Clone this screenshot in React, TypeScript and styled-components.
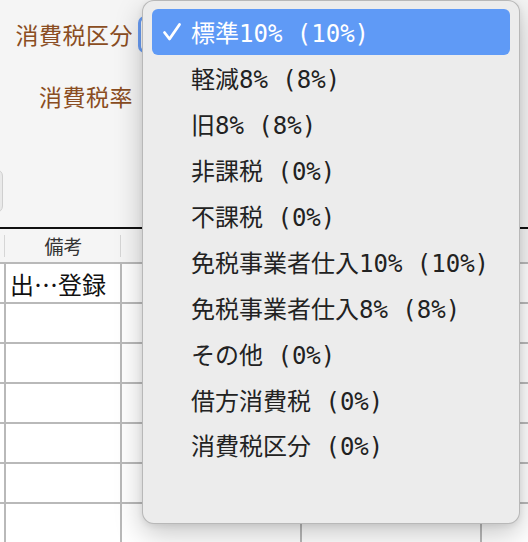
import React from "react";
import styled, { createGlobalStyle } from "styled-components";

const GlobalStyle = createGlobalStyle`
  html, body { margin: 0; padding: 0; }
  body {
    width: 528px;
    height: 542px;
    overflow: hidden;
    background: #f5f5f5;
    font-family: "Noto Sans CJK JP", "Noto Sans", sans-serif;
  }
`;

const Page = styled.div`
  position: relative;
  width: 528px;
  height: 542px;
  overflow: hidden;
  background: #f5f5f5;
`;

const Form = styled.div`
  display: flex;
  flex-direction: column;
  height: 227px;
`;

const FieldRow = styled.div<{ $h: number }>`
  display: flex;
  align-items: center;
  height: ${(p) => p.$h}px;
  gap: 5px;
`;

const Label = styled.div`
  width: 133px;
  text-align: right;
  font-size: 23px;
  line-height: 30px;
  color: #8a4d22;
  letter-spacing: 0.5px;
  white-space: nowrap;
`;

const SelectBox = styled.div`
  width: 200px;
  height: 37px;
  box-sizing: border-box;
  border: 3px solid #6a9ef5;
  border-radius: 7px;
  background: #ffffff;
`;

const Spacer = styled.div<{ $h: number }>`
  height: ${(p) => p.$h}px;
`;

const SideButton = styled.div`
  width: 42px;
  height: 44px;
  margin-left: -39px;
  box-sizing: border-box;
  border: 1px solid #cfcfcf;
  border-radius: 7px;
  background: #e9e9e9;
`;

const HeaderRow = styled.div`
  display: grid;
  grid-template-columns: 4px 114px 178px 178px 1fr;
  column-gap: 2px;
  height: 33px;
  border-top: 2px solid #111;
  background: #f5f5f5;
`;

const HeaderCell = styled.div<{ $divider?: boolean }>`
  display: flex;
  align-items: center;
  justify-content: center;
  font-size: 19px;
  color: #333;
  background: ${(p) =>
    p.$divider
      ? "linear-gradient(#d6d6d6, #d6d6d6) right center / 1px 22px no-repeat"
      : "none"};
  margin-right: ${(p) => (p.$divider ? "-1px" : "0")};
`;

const Body = styled.div`
  display: grid;
  grid-template-columns: 4px 114px 178px 178px 1fr;
  grid-auto-rows: 38px;
  gap: 2px;
  padding-top: 2px;
  background: #b9b9b9;
`;

const Cell = styled.div`
  background: #ffffff;
  display: flex;
  align-items: center;
  padding-left: 4px;
  font-size: 24px;
  color: #111;
  white-space: nowrap;
  overflow: hidden;
`;

const Menu = styled.div`
  position: absolute;
  left: 142px;
  top: 0px;
  width: 378px;
  height: 524px;
  box-sizing: border-box;
  padding: 8px 9px 9px;
  background: #ececec;
  border: 1px solid rgba(0, 0, 0, 0.22);
  border-radius: 12px;
  box-shadow: 0 10px 28px rgba(0, 0, 0, 0.22), 0 2px 6px rgba(0, 0, 0, 0.08);
  display: flex;
  flex-direction: column;
`;

const Item = styled.div<{ $selected?: boolean }>`
  height: 45.9px;
  flex: none;
  display: flex;
  align-items: center;
  border-radius: 6px;
  padding-left: 39px;
  position: relative;
  font-family: "DejaVu Sans Mono", "Noto Sans CJK JP", monospace;
  font-size: 24px;
  color: ${(p) => (p.$selected ? "#ffffff" : "#222222")};
  background: ${(p) => (p.$selected ? "#5f9af6" : "transparent")};
  white-space: pre;
`;

const Check = styled.svg`
  position: absolute;
  left: 10px;
  top: 13px;
  width: 20px;
  height: 20px;
`;

const items = [
  "標準10% (10%)",
  "軽減8% (8%)",
  "旧8% (8%)",
  "非課税 (0%)",
  "不課税 (0%)",
  "免税事業者仕入10% (10%)",
  "免税事業者仕入8% (8%)",
  "その他 (0%)",
  "借方消費税 (0%)",
  "消費税区分 (0%)",
];

const bodyRows = 7;

export default function App() {
  return (
    <>
      <GlobalStyle />
      <Page>
        <Form>
          <FieldRow $h={68}>
            <Label>消費税区分</Label>
            <SelectBox />
          </FieldRow>
          <FieldRow $h={56}>
            <Label>消費税率</Label>
          </FieldRow>
          <Spacer $h={43} />
          <FieldRow $h={48}>
            <SideButton />
          </FieldRow>
        </Form>
        <HeaderRow>
          <HeaderCell $divider />
          <HeaderCell $divider>備考</HeaderCell>
          <HeaderCell $divider />
          <HeaderCell $divider />
          <HeaderCell />
        </HeaderRow>
        <Body>
          {Array.from({ length: bodyRows }).map((_, r) => (
            <React.Fragment key={r}>
              <Cell />
              <Cell>{r === 0 ? "出…登録" : ""}</Cell>
              <Cell />
              <Cell />
              <Cell />
            </React.Fragment>
          ))}
        </Body>
        <Menu>
          {items.map((t, i) => (
            <Item key={t} $selected={i === 0}>
              {i === 0 && (
                <Check viewBox="0 0 20 20">
                  <polyline
                    points="2.5,10.5 7.5,17 17.5,2.5"
                    fill="none"
                    stroke="#ffffff"
                    strokeWidth="2.8"
                    strokeLinecap="round"
                    strokeLinejoin="round"
                  />
                </Check>
              )}
              {t}
            </Item>
          ))}
        </Menu>
      </Page>
    </>
  );
}
